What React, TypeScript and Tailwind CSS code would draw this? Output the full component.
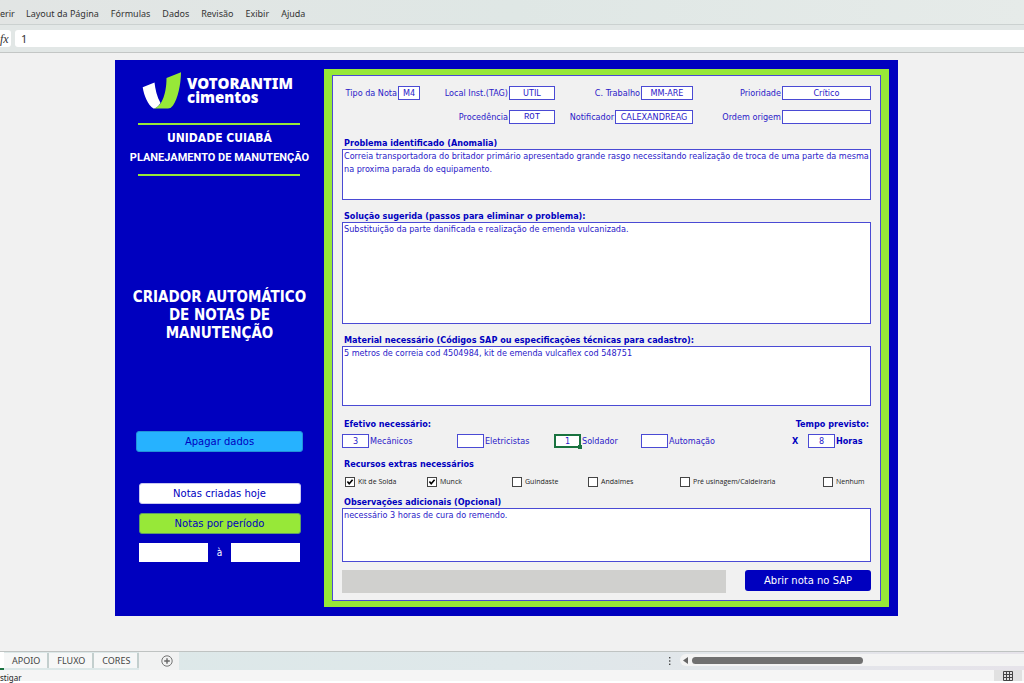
import type { ReactNode } from "react";

const menus = ["Layout da Página", "Fórmulas", "Dados", "Revisão", "Exibir", "Ajuda"];
const sheets = ["APOIO", "FLUXO", "CORES"];

function Field({ id, label, value, box }: { id: string; label: string; value: string; box: string }) {
  return (
    <div className="flex items-center justify-end gap-px">
      <label htmlFor={id} className="whitespace-nowrap">
        {label}
      </label>
      <input
        id={id}
        defaultValue={value}
        className={`border border-[#4a4ad4] bg-white text-center outline-none ${box}`}
      />
    </div>
  );
}

function Area({ id, label, value, box }: { id: string; label: string; value: string; box: string }) {
  return (
    <div className="flex flex-col">
      <label htmlFor={id} className="pl-0.5 text-[9px] leading-3 font-bold text-[#0000bf]">
        {label}
      </label>
      <textarea
        id={id}
        defaultValue={value}
        className={`block w-full resize-none overflow-hidden border border-[#4a4ad4] bg-white px-px leading-[13px] outline-none ${box}`}
      />
    </div>
  );
}

function Crew({ id, label, value, active }: { id: string; label: string; value: string; active?: boolean }) {
  return (
    <div className="flex items-center gap-px">
      <div className="relative flex">
        <input
          id={id}
          defaultValue={value}
          className={
            active
              ? "h-[14px] w-[27px] border-2 border-[#1a7340] bg-white text-center outline-none"
              : "h-[14px] w-[27px] border border-[#4a4ad4] bg-white text-center outline-none"
          }
        />
        {active && <span className="absolute -right-px -bottom-px size-1 bg-[#1a7340]" />}
      </div>
      <label htmlFor={id}>{label}</label>
    </div>
  );
}

function Check({ label, checked }: { label: string; checked?: boolean }) {
  return (
    <label className="flex items-center gap-[3px] font-['Open_Sans',sans-serif] text-[7px] leading-[10px] whitespace-nowrap text-[#222]">
      <span className="relative flex">
        <input
          type="checkbox"
          defaultChecked={checked}
          className="peer size-[10px] appearance-none border border-[#444] bg-white"
        />
        <svg
          viewBox="0 0 10 10"
          className="pointer-events-none absolute inset-0 hidden size-[10px] peer-checked:block"
        >
          <path d="M2.4 4.6 4.2 6.8 7.6 2.8" fill="none" stroke="#000" strokeWidth="1.6" />
        </svg>
      </span>
      {label}
    </label>
  );
}

function SideButton({ children, look }: { children: ReactNode; look: string }) {
  return (
    <button
      type="button"
      className={`rounded-[3px] border text-center font-['DejaVu_Sans',sans-serif] text-[10px] text-[#0000bf] ${look}`}
    >
      {children}
    </button>
  );
}

function Logo() {
  return (
    <div className="flex items-start gap-1.5 pt-3 pr-1">
      <svg viewBox="0 0 39 37" className="h-[37px] w-[39px]" aria-hidden="true">
        <path d="M.7 15.3 12.5 10.5C13.2 17 15 25 18.5 31C16.5 34.5 14 36.5 11.5 36.5C6 33 2 24 .7 15.3Z" fill="#fff" />
        <path d="M24.5 6 39 .3C38.8 13 36 26 31 33.5Q29 36.5 26 36.5H11.5C19 35.5 24.5 23 24.5 6Z" fill="#97e838" />
      </svg>
      <div className="pt-1 font-['Noto_Sans',sans-serif] text-[15px] leading-[14px] font-black text-white">
        VOTORANTIM
        <br />
        cimentos
      </div>
    </div>
  );
}

function Sidebar() {
  return (
    <aside className="flex w-[209px] shrink-0 flex-col items-center text-white">
      <Logo />
      <div className="mt-3.5 flex flex-col items-center">
        <div className="h-0.5 w-[162px] bg-[#97e838]" />
        <div className="mt-[3px] mb-1 text-center leading-5 font-bold whitespace-nowrap">
          <div className="text-[12px]">UNIDADE CUIABÁ</div>
          <div className="font-['Roboto',sans-serif] text-[11px]">PLANEJAMENTO DE MANUTENÇÃO</div>
        </div>
        <div className="mt-0.5 h-0.5 w-[162px] bg-[#97e838]" />
      </div>
      <h1 className="mt-28 text-center text-[15px] leading-[18px] font-bold whitespace-nowrap">
        CRIADOR AUTOMÁTICO
        <br />
        DE NOTAS DE
        <br />
        MANUTENÇÃO
      </h1>
      <SideButton look="mt-[89px] h-[21px] w-[167px] border-[#2292d8] bg-[#26b2ff]">Apagar dados</SideButton>
      <SideButton look="mt-[31px] h-[21px] w-[162px] border-[#c8c8f0] bg-white">Notas criadas hoje</SideButton>
      <SideButton look="mt-[9px] h-[21px] w-[162px] border-[#5d9c68] bg-[#97e838]">Notas por período</SideButton>
      <div className="mt-[9px] flex w-[162px] items-center justify-between">
        <input aria-label="Data inicial" className="h-[19px] w-[69px] bg-white text-center text-[#0000bf]" />
        <span className="text-[10px]">à</span>
        <input aria-label="Data final" className="h-[19px] w-[69px] bg-white text-center text-[#0000bf]" />
      </div>
    </aside>
  );
}

function Form() {
  return (
    <main className="min-w-0 flex-1 border-x-8 border-y-[6px] border-[#97e838]">
      <div className="h-full border border-[#4a4ad4] bg-[#f1f1f1] px-[9px] pt-2.5 pb-[7px] text-[9px] leading-[13px] text-[#2a20c8]">
        <div className="grid grid-cols-[78fr_135fr_138fr_178fr] gap-y-2.5">
          <Field id="tipo" label="Tipo da Nota" value="M4" box="h-[14px] w-[22px]" />
          <Field id="local" label="Local Inst.(TAG)" value="UTIL" box="h-[14px] w-[46px]" />
          <Field id="trabalho" label="C. Trabalho" value="MM-ARE" box="h-[14px] w-[52px]" />
          <Field id="prioridade" label="Prioridade" value="Crítico" box="h-[14px] w-[89px]" />
          <div />
          <Field
            id="procedencia"
            label="Procedência"
            value="ROT"
            box="h-[14px] w-[46px] font-['Liberation_Mono',monospace]"
          />
          <Field id="notificador" label="Notificador" value="CALEXANDREAG" box="h-[14px] w-[78px]" />
          <Field id="ordem" label="Ordem origem" value="" box="h-[14px] w-[89px]" />
        </div>
        <div className="mt-[13px] flex flex-col gap-2.5">
          <Area
            id="problema"
            label="Problema identificado (Anomalia)"
            value="Correia transportadora do britador primário apresentado grande rasgo necessitando realização de troca de uma parte da mesma na proxima parada do equipamento."
            box="h-[51px]"
          />
          <Area
            id="solucao"
            label="Solução sugerida (passos para eliminar o problema):"
            value="Substituição da parte danificada e realização de emenda vulcanizada."
            box="h-[102px]"
          />
          <Area
            id="material"
            label="Material necessário (Códigos SAP ou especificações técnicas para cadastro):"
            value="5 metros de correia cod 4504984, kit de emenda vulcaflex cod 548751"
            box="h-[60px]"
          />
        </div>
        <div className="mt-3 flex justify-between px-0.5 leading-3 font-bold text-[#0000bf]">
          <h2>Efetivo necessário:</h2>
          <h2>Tempo previsto:</h2>
        </div>
        <div className="mt-1 grid grid-cols-[115fr_97fr_87fr_151fr_79fr]">
          <Crew id="mecanicos" label="Mecânicos" value="3" />
          <Crew id="eletricistas" label="Eletricistas" value="" />
          <Crew id="soldador" label="Soldador" value="1" active />
          <Crew id="automacao" label="Automação" value="" />
          <div className="flex items-center font-bold text-[#0000bf]">
            <span className="w-4">X</span>
            <input
              id="horas"
              defaultValue="8"
              className="h-[14px] w-[27px] border border-[#4a4ad4] bg-white text-center font-normal text-[#2a20c8] outline-none"
            />
            <label htmlFor="horas" className="pl-px">
              Horas
            </label>
          </div>
        </div>
        <h2 className="mt-2.5 pl-0.5 leading-3 font-bold text-[#0000bf]">Recursos extras necessários</h2>
        <div className="mt-[7px] grid grid-cols-[82fr_85fr_76fr_92fr_143fr_48fr] pl-[3px]">
          <Check label="Kit de Solda" checked />
          <Check label="Munck" checked />
          <Check label="Guindaste" />
          <Check label="Andaimes" />
          <Check label="Pré usinagem/Caldeiraria" />
          <Check label="Nenhum" />
        </div>
        <div className="mt-[9px]">
          <Area
            id="observacoes"
            label="Observações adicionais (Opcional)"
            value="necessário 3 horas de cura do remendo."
            box="h-[54px]"
          />
        </div>
        <div className="mt-2 flex items-start gap-[19px]">
          <div className="h-[23px] flex-1 bg-[#d0d0ce]" />
          <button
            type="button"
            className="h-[21px] w-[126px] rounded-[3px] bg-[#0000bf] font-['DejaVu_Sans',sans-serif] text-[10px] text-white"
          >
            Abrir nota no SAP
          </button>
        </div>
      </div>
    </main>
  );
}

export default function App() {
  return (
    <div className="flex min-h-screen flex-col overflow-hidden bg-[#f1f1f1] font-['DejaVu_Sans_Condensed','DejaVu_Sans',sans-serif]">
      <header className="bg-[#e2e7e6] font-['Noto_Sans',sans-serif] text-[9px] text-[#333]">
        <nav className="flex h-[25px] items-center gap-3 border-b border-[#cbd1d0] bg-linear-to-r from-[#e2e5e4] via-[#dfe7e5] to-[#e6ebe9] pt-[3px]">
          <a href="#inserir" className="flex w-3.5 justify-start">
            erir
          </a>
          {menus.map((menu) => (
            <a key={menu} href={`#${menu}`} className="whitespace-nowrap">
              {menu}
            </a>
          ))}
        </nav>
        <div className="flex h-7 items-center gap-1 border-b border-[#c3c6c5]">
          <button
            type="button"
            className="h-[17px] w-[11px] rounded-r-[3px] bg-white text-left font-['Liberation_Serif',serif] text-[12px] leading-none italic"
          >
            fx
          </button>
          <input
            aria-label="Barra de fórmulas"
            defaultValue="1"
            className="h-[17px] flex-1 rounded-l-[3px] bg-white pl-1.5 text-[11px] outline-none"
          />
        </div>
      </header>

      <div className="flex-1 pt-[7px] pr-[126px] pb-[35px] pl-[115px]">
        <div className="flex bg-[#0000bf]">
          <Sidebar />
          <div className="flex min-w-0 flex-1 py-[9px] pr-[9px]">
            <Form />
          </div>
        </div>
      </div>

      <footer className="font-['Noto_Sans',sans-serif] text-[9px] text-[#444]">
        <div className="flex h-[19px] items-stretch border-t border-[#bfc3c2] bg-linear-to-r from-[#dce8e8] via-[#dfe8ea] to-[#e6e3ea]">
          <div className="w-1 border-b-2 border-[#1a7340] bg-white" />
          {sheets.map((sheet) => (
            <button
              key={sheet}
              type="button"
              className="mt-px mb-0.5 border-r-2 border-[#c3cfce] bg-[#f6f7f7] pr-[7px] pl-2"
            >
              {sheet}
            </button>
          ))}
          <button type="button" aria-label="Nova planilha" className="flex w-10 items-center justify-end bg-[#f1f2f2] pr-1.5">
            <svg viewBox="0 0 12 12" className="size-3" fill="none" stroke="#666">
              <circle cx="6" cy="6" r="5.2" strokeWidth="0.9" />
              <path d="M6 3.2V8.8M3.2 6H8.8" strokeWidth="1.4" />
            </svg>
          </button>
          <div className="flex-1" />
          <svg viewBox="0 0 4 10" className="w-1 self-center" fill="#444">
            <rect x="1" y="1" width="1.4" height="1.4" />
            <rect x="1" y="4.3" width="1.4" height="1.4" />
            <rect x="1" y="7.6" width="1.4" height="1.4" />
          </svg>
          <div className="mt-0.5 mb-1 ml-2 flex w-[344px] items-center gap-1 rounded-l-full bg-[#f3f3f3] pl-[3px]">
            <svg viewBox="0 0 5 7" className="h-[7px] w-[5px]" fill="#666">
              <path d="M5 0V7L0 3.5Z" />
            </svg>
            <div className="h-[7px] w-[171px] rounded-full bg-[#707070]" />
          </div>
        </div>
        <div className="flex h-[13px] items-start justify-between border-b-2 border-white bg-[#f5f5f5] pr-0.5">
          <span className="pt-0.5 text-[8px] leading-[11px] text-[#222]">stigar</span>
          <button type="button" aria-label="Exibição normal" className="flex h-[11px] w-[28px] items-center justify-center bg-[#e1e1e1]">
            <svg viewBox="0 0 10 10" className="size-[10px]" fill="none" stroke="#444">
              <path d="M.5.5H9.5V9.5H.5ZM3.5.5V9.5M6.5.5V9.5M.5 3.5H9.5M.5 6.5H9.5" strokeWidth="1" />
            </svg>
          </button>
        </div>
      </footer>
    </div>
  );
}
